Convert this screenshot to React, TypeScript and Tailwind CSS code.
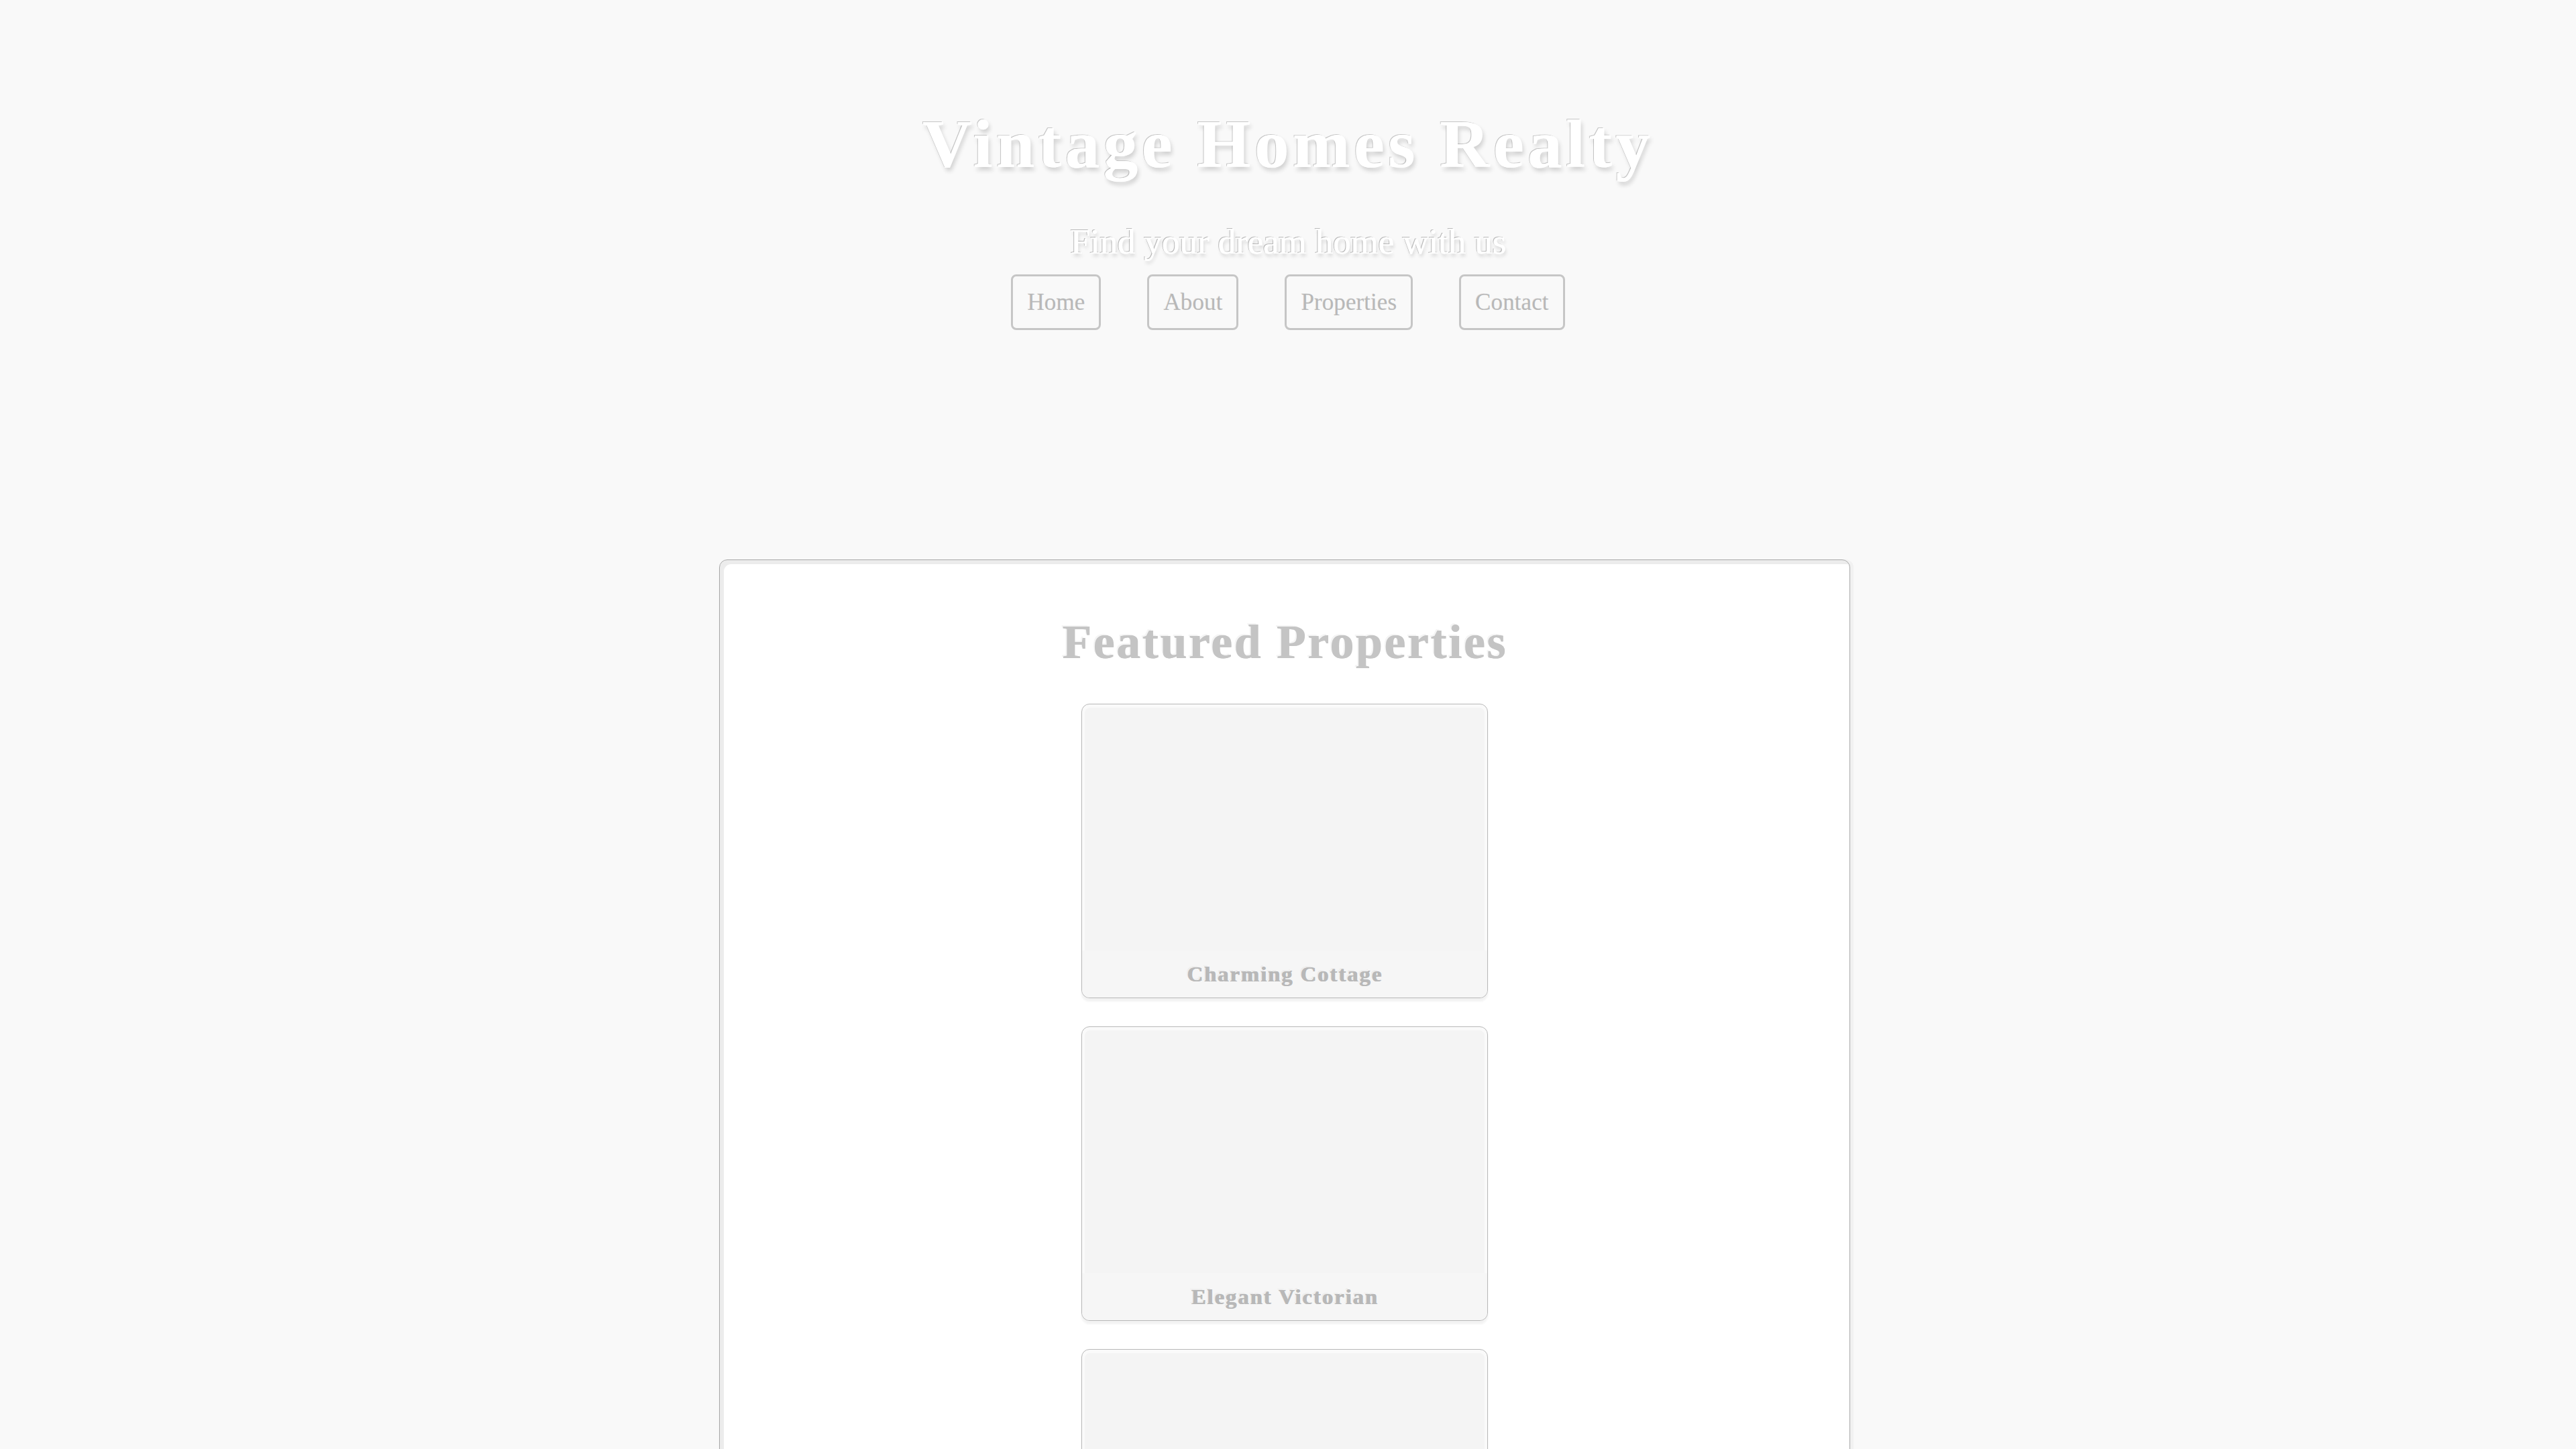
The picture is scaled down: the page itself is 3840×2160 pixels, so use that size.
const navItems = ['Home', 'About', 'Properties', 'Contact'];

const properties = [
  { name: 'Charming Cottage' },
  { name: 'Elegant Victorian' },
  { name: 'Rustic Farmhouse' },
];

function PropertyCard({ name }: { name: string }) {
  return (
    <div className="w-[606px] rounded-xl border border-[#b8b8b8] bg-[#fafafa] pt-[5px] shadow-[0_5px_3px_rgba(0,0,0,0.05)]">
      <div className="mx-[4px] h-[362px] rounded-t-lg bg-[#f4f4f4]" />
      <div className="h-[70px] rounded-b-xl bg-[#f6f6f6] pt-[19px] text-center">
        <h3 className="text-[32.6px] leading-none font-bold tracking-[2px] text-[#b8b8b8] [text-shadow:1px_0_0_#b8b8b8,-2px_-2px_0_rgba(0,0,0,0.05)]">
          {name}
        </h3>
      </div>
    </div>
  );
}

export default function App() {
  return (
    <div className="min-h-screen bg-[#f9f9f9] font-['Liberation_Serif','Times_New_Roman',serif]">
      <header className="flex flex-col items-center pt-[164px]">
        <h1 className="text-[102px] leading-none font-bold tracking-[6px] text-white [text-shadow:1px_0_0_#fff,-1px_-1px_0_rgba(0,0,0,0.2),3px_5px_6px_rgba(0,0,0,0.16)]">
          Vintage Homes Realty
        </h1>
        <p className="mt-[68px] text-[52.8px] leading-none text-white [text-shadow:1px_0_0_#fff,-1px_-1px_0_rgba(0,0,0,0.25),2px_4px_5px_rgba(0,0,0,0.14)]">
          Find your dream home with us
        </p>
        <nav className="mt-[22px] flex gap-[69px]">
          {navItems.map((item) => (
            <a
              key={item}
              href="#"
              className="rounded-lg border-[3px] border-[#c6c6c6] px-[21px] py-[21px] text-[35.2px] leading-none text-[#b8b8b8] [text-shadow:-1px_-1px_0_rgba(0,0,0,0.06)]"
            >
              {item}
            </a>
          ))}
        </nav>
      </header>

      <main className="mt-[342px] pl-[1072px]">
        <section className="w-[1686px] rounded-t-xl border border-[#a8a8a8] bg-white pb-10 shadow-[inset_6px_6px_0_#ececec,5px_0_0_#f1f1f1]">
          <h2 className="pt-[87px] text-center text-[71px] leading-none font-bold tracking-[3px] text-[#c4c4c4] [text-shadow:1px_0_0_#c4c4c4,-2px_-2px_0_rgba(0,0,0,0.04)]">
            Featured Properties
          </h2>
          <div className="mt-[56px] flex flex-col items-center gap-[42px]">
            {properties.map((p) => (
              <PropertyCard key={p.name} name={p.name} />
            ))}
          </div>
        </section>
      </main>
    </div>
  );
}
